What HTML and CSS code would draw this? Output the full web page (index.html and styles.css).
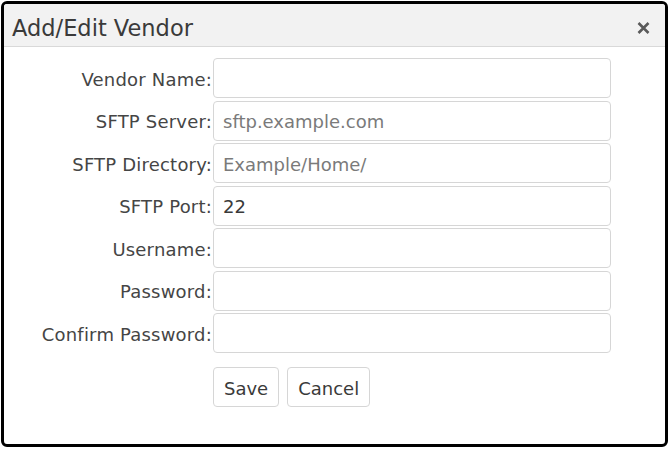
FILE: index.html
```html
<!DOCTYPE html>
<html lang="en">
<head>
  <meta charset="UTF-8">
  <title>Add/Edit Vendor</title>
  <link rel="stylesheet" href="styles.css">
</head>
<body>
  <div class="dialog">
    <div class="dialog-header">
      <h1>Add/Edit Vendor</h1>
      <button type="button" class="close" aria-label="Close">
        <svg width="13" height="12" viewBox="0 0 13 12"><path d="M1.5 1 L11.5 11 M11.5 1 L1.5 11" stroke="#5a5a5a" stroke-width="2.6" fill="none"/></svg>
      </button>
    </div>

    <form class="vendor-form">
      <label for="vendorName">Vendor Name:</label>
      <input type="text" id="vendorName">

      <label for="server">SFTP Server:</label>
      <input type="text" id="server" placeholder="sftp.example.com">

      <label for="directory">SFTP Directory:</label>
      <input type="text" id="directory" placeholder="Example/Home/">

      <label for="port">SFTP Port:</label>
      <input type="text" id="port" value="22">

      <label for="username">Username:</label>
      <input type="text" id="username">

      <label for="password">Password:</label>
      <input type="password" id="password">

      <label for="confirm">Confirm Password:</label>
      <input type="password" id="confirm">

      <div class="actions">
        <button type="submit" class="btn">Save</button>
        <button type="button" class="btn">Cancel</button>
      </div>
    </form>
  </div>
</body>
</html>
```

FILE: styles.css
```css
* {
  box-sizing: border-box;
  margin: 0;
  padding: 0;
}

body {
  font-family: 'DejaVu Sans', sans-serif;
  background: #ffffff;
  padding: 1px;
}

.dialog {
  width: 667px;
  height: 446px;
  border: 3px solid #000;
  border-radius: 6px;
  background: #fff;
  overflow: hidden;
}

.dialog-header {
  height: 43px;
  background: #f2f2f2;
  border-bottom: 1px solid #d9d9d9;
  display: flex;
  align-items: center;
  justify-content: space-between;
  padding: 5px 15px 0 8px;
}

h1 {
  font-size: 22.5px;
  font-weight: normal;
  color: #3a3a3a;
}

.close {
  border: none;
  background: none;
  display: flex;
  cursor: pointer;
}

.vendor-form {
  display: grid;
  grid-template-columns: 208px 398px;
  column-gap: 1px;
  row-gap: 2.5px;
  padding-top: 11px;
}

label {
  font-size: 18px;
  letter-spacing: 0.2px;
  color: #454545;
  text-align: right;
  align-self: center;
  padding-top: 2px;
}

input {
  height: 40px;
  font-family: inherit;
  font-size: 18px;
  color: #3a3a3a;
  padding: 2px 9px 0;
  border: 1.5px solid #d6d6d6;
  border-radius: 4px;
  outline: none;
}

input::placeholder {
  color: #7a7a7a;
}

.actions {
  grid-column: 2;
  display: flex;
  gap: 8px;
  margin-top: 11.5px;
}

.btn {
  height: 40px;
  padding: 2px 10px 0;
  font-family: inherit;
  font-size: 18px;
  color: #3a3a3a;
  background: #fff;
  border: 1.5px solid #d6d6d6;
  border-radius: 4px;
  cursor: pointer;
}
```
